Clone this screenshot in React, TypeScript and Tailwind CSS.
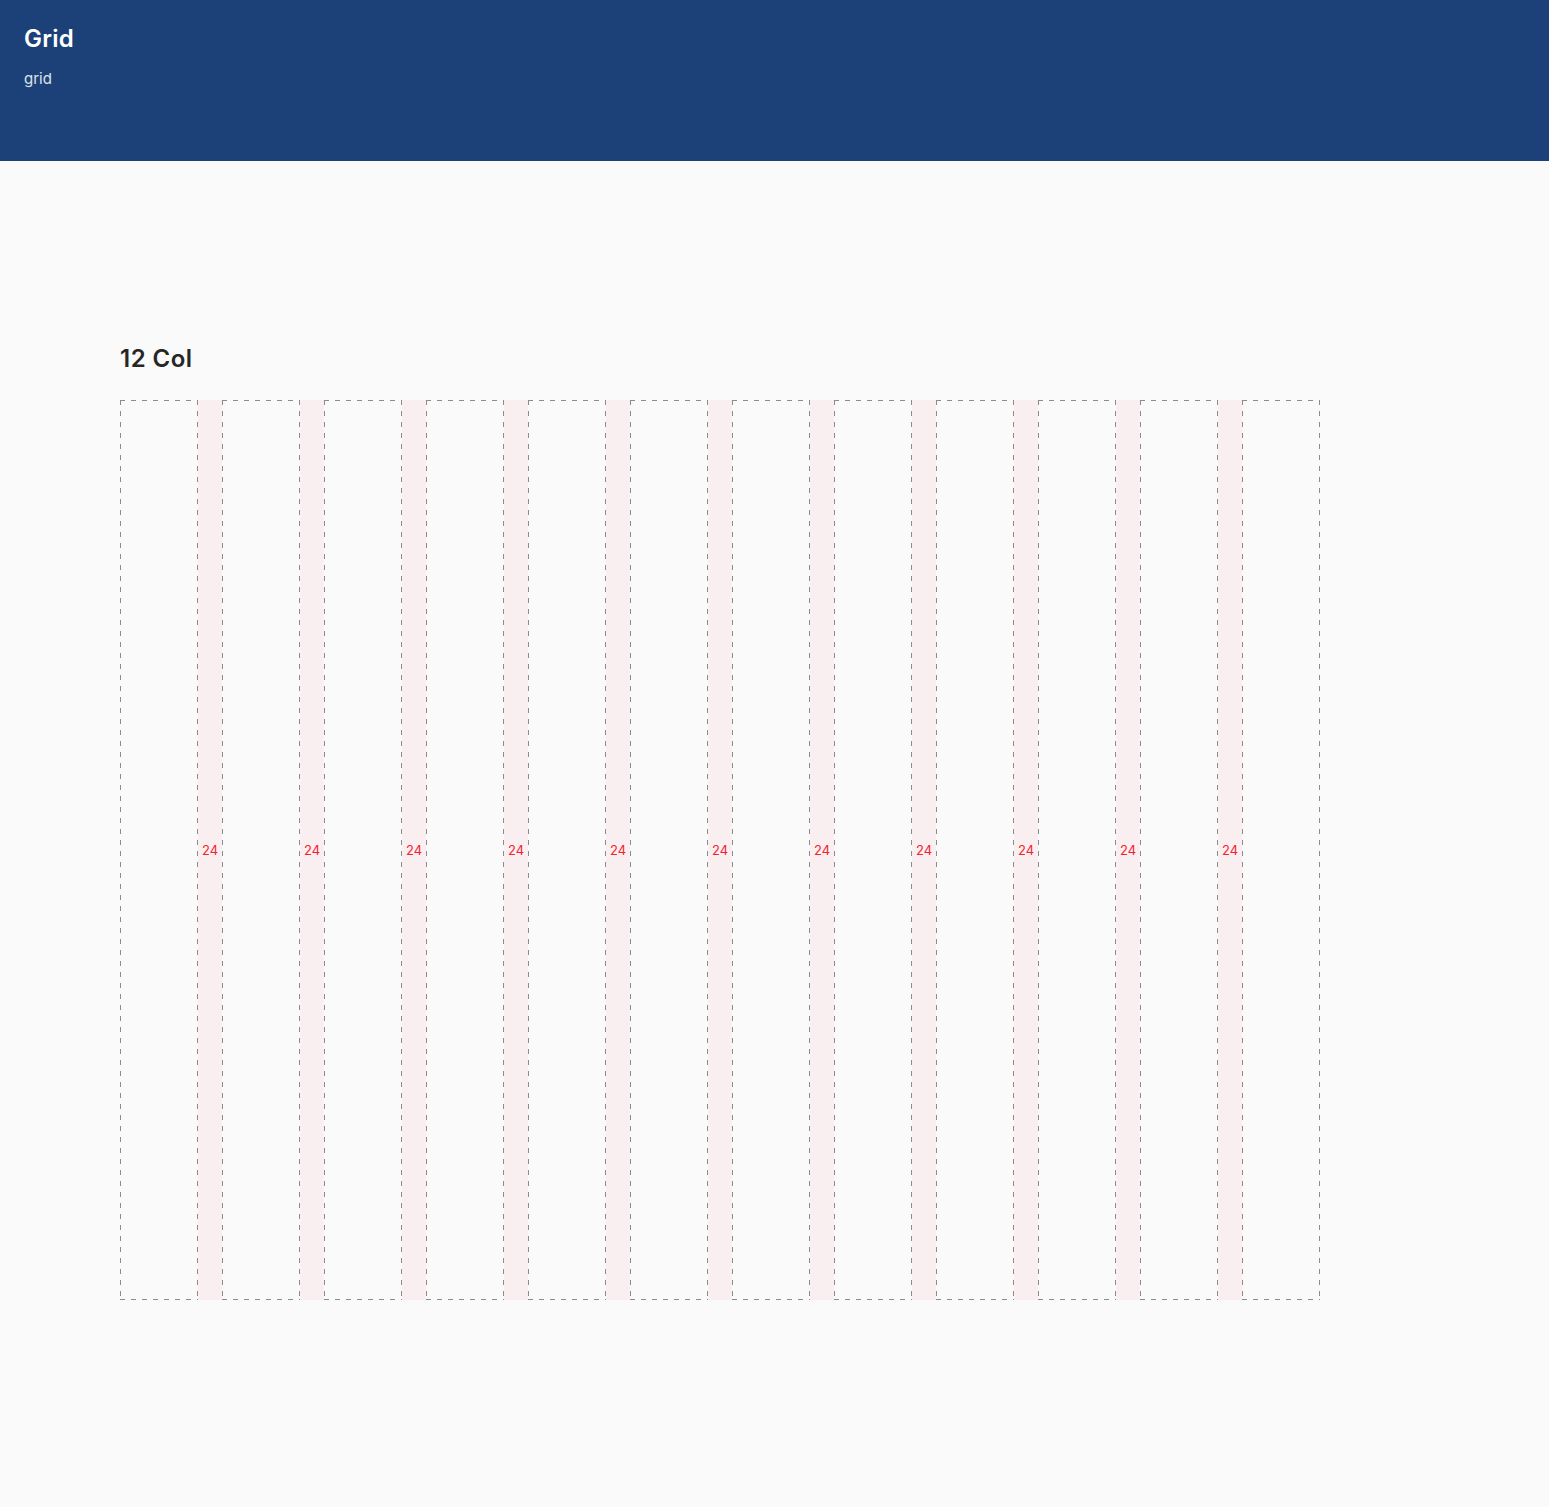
const columns = Array.from({ length: 12 }, (_, i) => i);

export default function App() {
  return (
    <div className="min-h-screen bg-[#fafafa] font-['Inter',sans-serif]">
      {/* Page header */}
      <header className="h-[161px] bg-[#1b4178] px-6 pt-6">
        <h1 className="text-2xl leading-[30px] font-semibold text-white tracking-[0.01em]">Grid</h1>
        <p className="mt-[15px] text-[15px] leading-5 text-white/85">grid</p>
      </header>

      <main className="pl-[120px] pt-[182px] pb-[207px]">
        <h2 className="text-2xl leading-8 font-semibold text-[#262626] tracking-[0.02em]">12 Col</h2>

        <div className="mt-[25px] flex h-[900px] w-[1200px]">
          {columns.map((i) => (
            <div key={i} className="flex">
              {/* dashed outline drawn with gradients for the longer dash pattern */}
              <div className="w-[78px] h-full bg-no-repeat [background-image:repeating-linear-gradient(90deg,#8c8c8c_0_5px,transparent_5px_11px),repeating-linear-gradient(90deg,#8c8c8c_0_5px,transparent_5px_11px),repeating-linear-gradient(180deg,#8c8c8c_0_5px,transparent_5px_11px),repeating-linear-gradient(180deg,#8c8c8c_0_5px,transparent_5px_11px)] [background-position:left_top,left_bottom,left_top,right_top] [background-size:100%_1px,100%_1px,1px_100%,1px_100%]" />
              {i < 11 && (
                <div className="w-6 h-full pt-[2px] bg-[#f9eef0] flex items-center justify-center text-[13px] text-[#f5222d]">
                  24
                </div>
              )}
            </div>
          ))}
        </div>
      </main>
    </div>
  );
}
